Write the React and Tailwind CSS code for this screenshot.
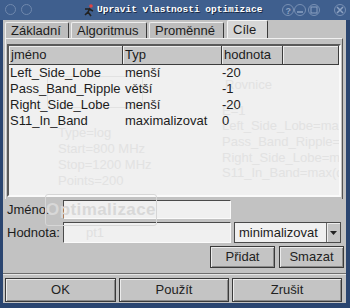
import React from 'react';

const rows = [
  { name: 'Left_Side_Lobe', typ: 'menší', val: '-20' },
  { name: 'Pass_Band_Ripple', typ: 'větší', val: '-1' },
  { name: 'Right_Side_Lobe', typ: 'menší', val: '-20' },
  { name: 'S11_In_Band', typ: 'maximalizovat', val: '0' },
];

// faint text of the window behind (the dialog is translucent)
const ghost = [
  { t: 'Rovnice', x: 225, y: 78 },
  { t: 'E=1', x: 222, y: 104 },
  { t: 'Left_Side_Lobe=ma', x: 222, y: 119 },
  { t: 'Pass_Band_Ripple=', x: 222, y: 135 },
  { t: 'Right_Side_Lobe=ma', x: 222, y: 151 },
  { t: 'S11_In_Band=max(d', x: 222, y: 166 },
  { t: 'Type=log', x: 58, y: 126 },
  { t: 'Start=800 MHz', x: 58, y: 142 },
  { t: 'Stop=1200 MHz', x: 58, y: 158 },
  { t: 'Points=200', x: 58, y: 174 },
];

function Raised({ className = '', children }) {
  return (
    <div
      className={
        'flex items-center justify-center border border-[#3a3a3a] bg-[#c4c4c4] shadow-[inset_1px_1px_0_#ececec,inset_-1px_-1px_0_#8a8a8a] text-[13px] text-[#222]' +
        ' ' +
        className
      }
    >
      {children}
    </div>
  );
}

function Tab({ label, w, active }) {
  return (
    <div
      className={
        'flex items-center px-[5px] rounded-t-[2px] border-t border-l border-r text-[13px] ' +
        (active
          ? 'h-[18px] bg-[#d6d6d6] border-t-[#f4f4f4] border-l-[#f4f4f4] border-r-[#3a3a3a]'
          : 'h-[16px] bg-[#bdbdbd] border-t-[#eeeeee] border-l-[#eeeeee] border-r-[#3a3a3a]')
      }
      style={{ width: w }}
    >
      {label}
    </div>
  );
}

function HeadCell({ w, children, grow }) {
  return (
    <div
      className={
        'h-[19px] flex items-center pl-[2px] bg-[#c6c6c6] border-r border-b border-[#3c3c3c] shadow-[inset_1px_1px_0_#ededed] ' +
        (grow ? 'flex-1' : '')
      }
      style={grow ? undefined : { width: w }}
    >
      {children}
    </div>
  );
}

export default function App() {
  return (
    <div className="w-[350px] h-[308px] bg-[#2a4570] flex flex-col overflow-hidden font-['Liberation_Sans',Arial,sans-serif] text-[#1c1c1c]">
      {/* title bar */}
      <div className="h-[20px] shrink-0 bg-[#3f5f8e] relative flex items-center">
        <div className="absolute left-[5px] top-[4px] w-[11px] h-[11px] rounded-full border border-[#6f88ad]" />
        <div className="absolute left-[21px] top-[4px] w-[11px] h-[11px] rounded-full border border-[#6f88ad]" />
        <div className="absolute left-[82px] top-[3px]">
          <svg width="14" height="14" viewBox="0 0 14 14">
            <circle cx="9" cy="3" r="1.8" fill="#d44" />
            <path d="M8 5 L6 9 L3 12 M6 9 L9 13 M7 6 L11 8 M7 6 L3 6" stroke="#222" strokeWidth="1.6" fill="none" />
          </svg>
        </div>
        <span className="absolute left-[97px] top-[3px] text-[9.5px] leading-[13px] font-bold text-white font-['Liberation_Mono',monospace] [text-shadow:1px_1px_0_#1a2a44]">
          Upravit vlastnosti optimizace
        </span>
        <svg className="absolute left-[282px] top-[3px]" width="66" height="15" viewBox="0 0 66 15">
          <circle cx="6" cy="7" r="5.5" fill="none" stroke="#7890b4" />
          <text x="3.5" y="11" fontSize="9" fill="#8ea3c3" fontFamily="Liberation Sans" fontWeight="bold">?</text>
          <circle cx="18" cy="7" r="5.5" fill="none" stroke="#7890b4" />
          <path d="M15 9 H21" stroke="#8ea3c3" strokeWidth="1.5" />
          <circle cx="32" cy="7" r="5.5" fill="none" stroke="#7890b4" />
          <rect x="29" y="4" width="6" height="6" fill="none" stroke="#8ea3c3" />
          <circle cx="58" cy="7" r="5.5" fill="none" stroke="#7890b4" />
          <path d="M55 4 L61 10 M61 4 L55 10" stroke="#8ea3c3" strokeWidth="1.5" />
        </svg>
      </div>

      {/* window body */}
      <div className="ml-[3px] w-[343px] h-[283px] bg-[#c2c2c2] flex flex-col">
        {/* tabs */}
        <div className="h-[18px] flex items-end pl-[2px]">
          <Tab label="Základní" w={64} />
          <div className="w-[2px]" />
          <Tab label="Algoritmus" w={76} />
          <div className="w-[2px]" />
          <Tab label="Proměnné" w={75} />
          <div className="w-[3px]" />
          <Tab label="Cíle" w={41} active />
        </div>

        {/* tab panel */}
        <div className="ml-[2px] w-[338px] h-[161px] border-t border-l border-t-[#f0f0f0] border-l-[#f0f0f0] border-r border-r-[#555] pt-[5px] pl-[1px] pr-[1px]">
          <div className="relative w-[334px] h-[153px] bg-[#f0f0f0] border-2 border-t-[#5a5a5a] border-l-[#5a5a5a] border-r-[#fafafa] border-b-[#fafafa] overflow-hidden">
            {ghost.map((g) => (
              <span
                key={g.t}
                className="absolute text-[13px] leading-[16px] text-[#e2e2e2] whitespace-nowrap"
                style={{ left: g.x - 9, top: g.y - 47 }}
              >
                {g.t}
              </span>
            ))}
            <div className="absolute left-[38px] top-[30px] w-[96px] h-[32px] border border-[#e2e2e2] rounded-[3px]" />
            <div className="relative flex text-[13px]">
              <HeadCell w={114}>jméno</HeadCell>
              <HeadCell w={99}>Typ</HeadCell>
              <HeadCell w={61}>hodnota</HeadCell>
              <HeadCell grow />
            </div>
            <div className="relative flex flex-col text-[13px]">
              {rows.map((r) => (
                <div key={r.name} className="h-[16px] flex items-center leading-[16px]">
                  <div className="w-[114px] pl-[1px] whitespace-nowrap">{r.name}</div>
                  <div className="w-[99px] pl-[2px] whitespace-nowrap">{r.typ}</div>
                  <div className="w-[61px]">{r.val}</div>
                </div>
              ))}
            </div>
          </div>
        </div>

        {/* form */}
        <div className="relative flex items-center mt-[1px] h-[19px] pl-[4px] text-[13px]">
          <span className="w-[56px]">Jméno:</span>
          <div className="w-[168px] h-[19px] bg-[#f0f0f0] border border-t-[#4a4a4a] border-l-[#4a4a4a] border-r-[#fafafa] border-b-[#fafafa]" />
          <div className="absolute left-[42px] top-[-6px] w-[112px] h-[32px] border border-[#d6d6d6] rounded-[3px] flex items-center justify-center text-[17px] font-bold text-[#d8d8d8] tracking-wide">
            Optimalizace
          </div>
        </div>
        <div className="flex items-center mt-[3px] h-[21px] pl-[4px] text-[13px]">
          <span className="w-[56px]">Hodnota:</span>
          <div className="w-[168px] h-[21px] bg-[#f0f0f0] border border-t-[#4a4a4a] border-l-[#4a4a4a] border-r-[#fafafa] border-b-[#fafafa] flex items-center pl-[22px] text-[#e0e0e0]">
            pt1
          </div>
          <div className="ml-[3px] w-[107px] h-[21px] bg-[#f0f0f0] border border-[#4a4a4a] flex items-center">
            <span className="flex-1 pl-[4px]">minimalizovat</span>
            <div className="w-[14px] h-[19px] bg-[#c4c4c4] shadow-[inset_1px_1px_0_#ededed] border-l border-[#6a6a6a] flex items-center justify-center">
              <svg width="7" height="4" viewBox="0 0 7 4">
                <path d="M0 0 H7 L3.5 4 Z" fill="#222" />
              </svg>
            </div>
          </div>
        </div>
        <div className="flex justify-end gap-[4px] mt-[3px] pr-[2px] h-[22px]">
          <Raised className="w-[65px] h-[22px]">Přidat</Raised>
          <Raised className="w-[65px] h-[22px]">Smazat</Raised>
        </div>

        {/* separator */}
        <div className="mt-[5px] h-[2px] border-t border-[#6e6e6e] border-b border-b-[#e6e6e6]" />

        <div className="flex gap-[3px] pl-[2px] mt-[3px]">
          <Raised className="w-[111px] h-[24px]">OK</Raised>
          <Raised className="w-[110px] h-[24px]">Použít</Raised>
          <Raised className="w-[110px] h-[24px]">Zrušit</Raised>
        </div>
      </div>
    </div>
  );
}
